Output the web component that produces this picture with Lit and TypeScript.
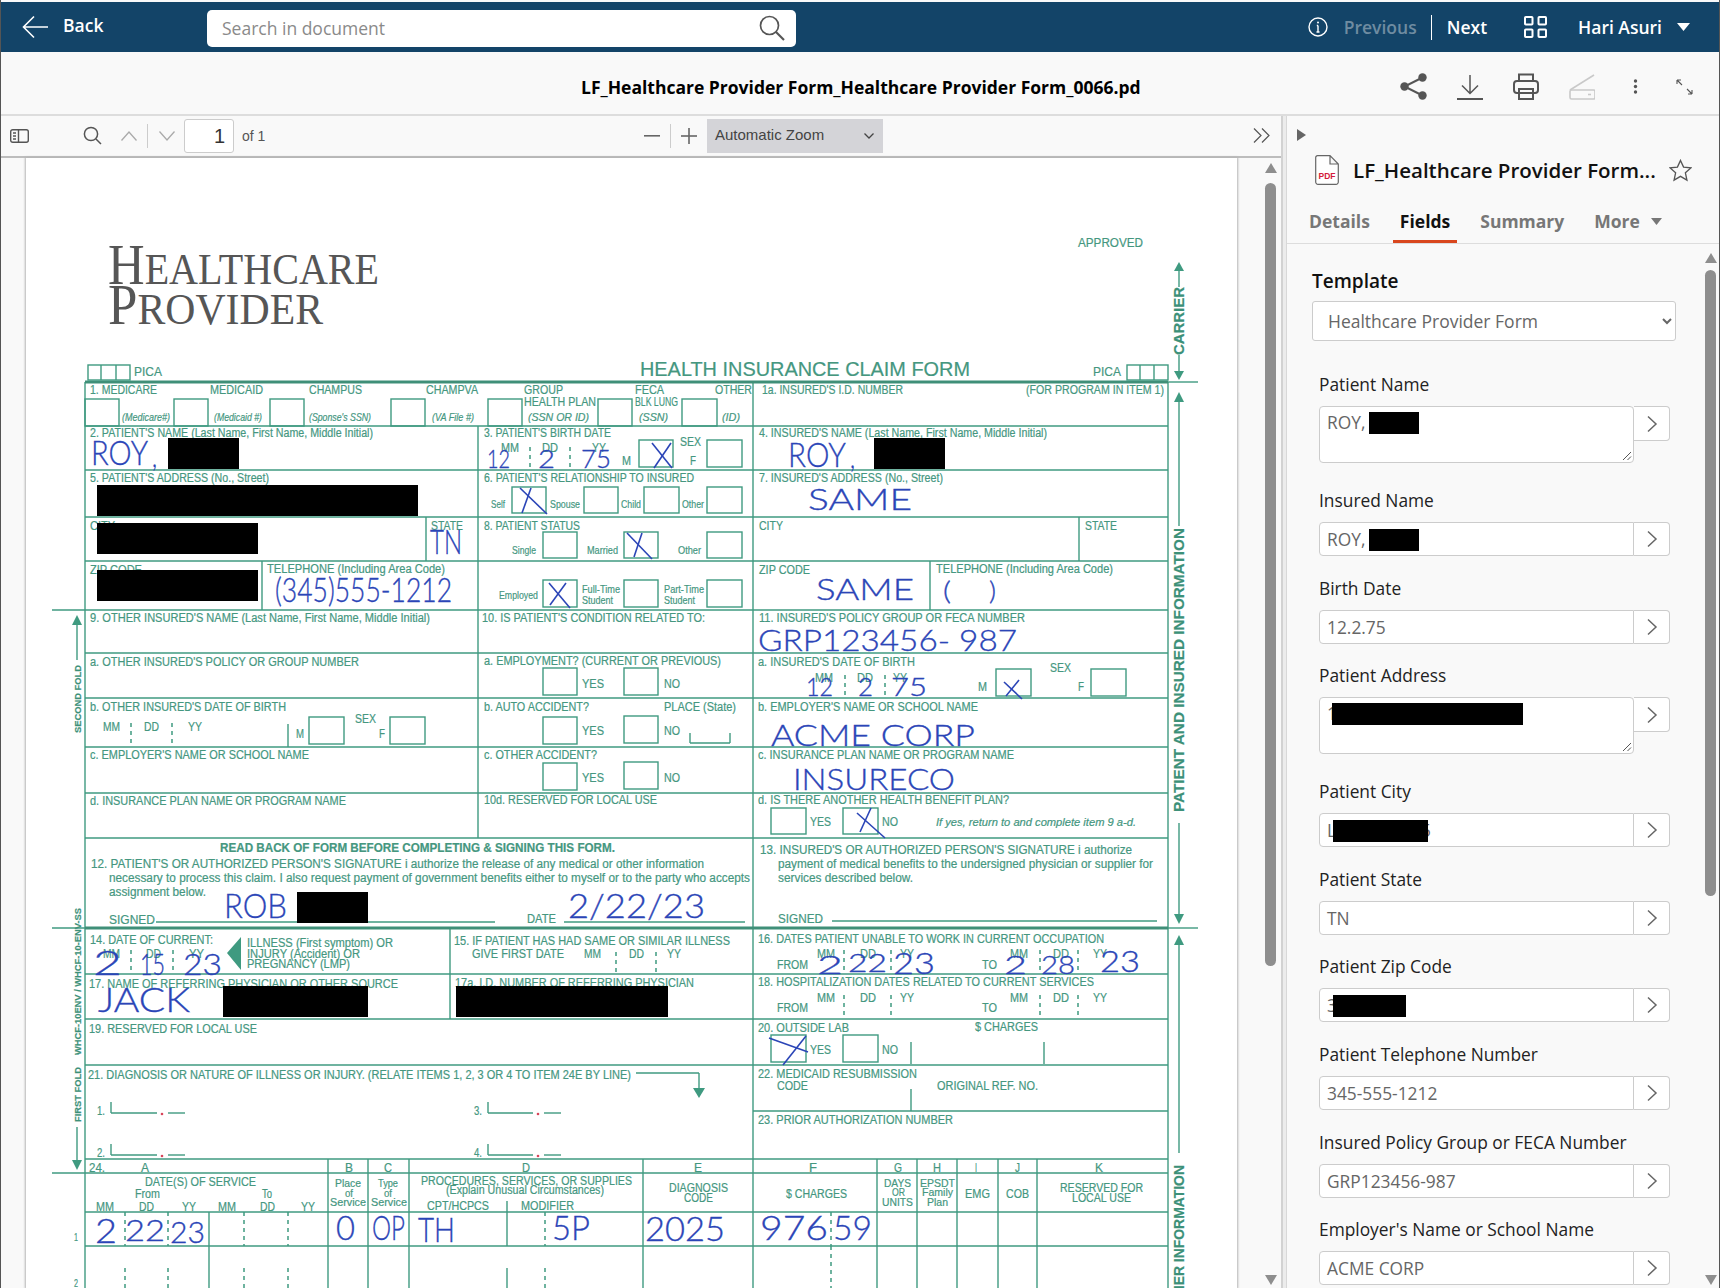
import { LitElement, html, css, svg } from "lit";
import { customElement } from "lit/decorators.js";

type L = [number, number, number, string, string?];
const labels: L[] = [
  [1078,1143,247,"APPROVED","t12"],[640,970,376,"HEALTH INSURANCE CLAIM FORM","t20"],
  [134,162,376,"PICA","t12"],[1093,1121,376,"PICA","t12"],
  [90,157,394,"1. MEDICARE"],[210,263,394,"MEDICAID"],[309,362,394,"CHAMPUS"],[426,478,394,"CHAMPVA"],[524,563,394,"GROUP"],[635,664,394,"FECA"],[715,752,394,"OTHER"],
  [524,596,406,"HEALTH PLAN"],[635,678,406,"BLK LUNG"],
  [122,170,421,"(Medicare#)","it"],[214,262,421,"(Medicaid #)","it"],[309,371,421,"(Sponse's SSN)","it"],[432,474,421,"(VA File #)","it"],[528,589,421,"(SSN OR ID)","it"],[639,668,421,"(SSN)","it"],[722,740,421,"(ID)","it"],
  [762,903,394,"1a. INSURED'S I.D. NUMBER"],[1026,1164,394,"(FOR PROGRAM IN ITEM 1)"],
  [90,373,437,"2. PATIENT'S NAME (Last Name, First Name, Middle Initial)"],[484,611,437,"3. PATIENT'S BIRTH DATE"],
  [501,519,452,"MM"],[542,558,452,"DD"],[592,606,452,"YY"],[622,631,465,"M"],[680,701,446,"SEX"],[690,696,465,"F"],
  [759,1047,437,"4. INSURED'S NAME (Last Name, First Name, Middle Initial)"],
  [90,269,482,"5. PATIENT'S ADDRESS (No., Street)"],[484,694,482,"6. PATIENT'S RELATIONSHIP TO INSURED"],[759,943,482,"7. INSURED'S ADDRESS (No., Street)"],
  [491,505,508,"Self","t10"],[550,580,508,"Spouse","t10"],[621,641,508,"Child","t10"],[682,704,508,"Other","t10"],
  [90,115,530,"CITY"],[431,463,530,"STATE"],[484,580,530,"8. PATIENT STATUS"],[759,783,530,"CITY"],[1085,1117,530,"STATE"],
  [512,536,554,"Single","t10"],[587,618,554,"Married","t10"],[678,701,554,"Other","t10"],
  [90,142,574,"ZIP CODE"],[267,445,573,"TELEPHONE (Including Area Code)"],[759,810,574,"ZIP CODE"],[936,1113,573,"TELEPHONE (Including Area Code)"],
  [499,538,599,"Employed","t10"],[582,620,593,"Full-Time","t10"],[582,613,604,"Student","t10"],[664,704,593,"Part-Time","t10"],[664,695,604,"Student","t10"],
  [90,430,622,"9. OTHER INSURED'S NAME (Last Name, First Name, Middle Initial)"],[482,705,622,"10. IS PATIENT'S CONDITION RELATED TO:"],[759,1025,622,"11. INSURED'S POLICY GROUP OR FECA NUMBER"],
  [90,359,666,"a. OTHER INSURED'S POLICY OR GROUP NUMBER"],[484,721,665,"a. EMPLOYMENT? (CURRENT OR PREVIOUS)"],[758,915,666,"a. INSURED'S DATE OF BIRTH"],
  [582,604,688,"YES"],[664,680,688,"NO"],[815,833,682,"MM"],[857,873,682,"DD"],[893,907,682,"YY"],[978,987,691,"M"],[1050,1071,672,"SEX"],[1078,1084,691,"F"],
  [90,286,711,"b. OTHER INSURED'S DATE OF BIRTH"],[484,589,711,"b. AUTO ACCIDENT?"],[664,736,711,"PLACE (State)"],[758,978,711,"b. EMPLOYER'S NAME OR SCHOOL NAME"],
  [103,120,731,"MM"],[144,159,731,"DD"],[188,202,731,"YY"],[296,304,738,"M"],[355,376,723,"SEX"],[379,385,738,"F"],[582,604,735,"YES"],[664,680,735,"NO"],
  [90,309,759,"c. EMPLOYER'S NAME OR SCHOOL NAME"],[484,597,759,"c. OTHER ACCIDENT?"],[758,1014,759,"c. INSURANCE PLAN NAME OR PROGRAM NAME"],
  [582,604,782,"YES"],[664,680,782,"NO"],
  [90,346,805,"d. INSURANCE PLAN NAME OR PROGRAM NAME"],[484,657,804,"10d. RESERVED FOR LOCAL USE"],[758,1009,804,"d. IS THERE ANOTHER HEALTH BENEFIT PLAN?"],
  [810,831,826,"YES"],[882,898,826,"NO"],[936,1136,826,"If yes, return to and complete item 9 a-d.","it"],
  [220,615,852,"READ BACK OF FORM BEFORE COMPLETING & SIGNING THIS FORM.","bd"],
  [91,704,868,"12. PATIENT'S OR AUTHORIZED PERSON'S SIGNATURE i authorize the release of any medical or other information"],
  [109,750,882,"necessary to process this claim. I also request payment of government benefits either to myself or to the party who accepts"],
  [109,206,896,"assignment below."],[109,155,924,"SIGNED"],[527,556,923,"DATE"],
  [760,1132,854,"13. INSURED'S OR AUTHORIZED PERSON'S SIGNATURE i authorize"],[778,1153,868,"payment of medical benefits to the undersigned physician or supplier for"],[778,913,882,"services described below."],[778,823,923,"SIGNED"],
  [90,213,944,"14. DATE OF CURRENT:"],[103,120,958,"MM"],[146,161,958,"DD"],[189,204,958,"YY"],
  [247,393,947,"ILLNESS (First symptom) OR"],[247,360,958,"INJURY (Accident) OR"],[247,350,968,"PREGNANCY (LMP)"],
  [454,730,945,"15. IF PATIENT HAS HAD SAME OR SIMILAR ILLNESS"],[472,564,958,"GIVE FIRST DATE"],[584,601,958,"MM"],[629,644,958,"DD"],[667,681,958,"YY"],
  [758,1104,943,"16. DATES PATIENT UNABLE TO WORK IN CURRENT OCCUPATION"],[817,835,958,"MM"],[860,876,958,"DD"],[900,914,958,"YY"],[777,808,969,"FROM"],[982,997,969,"TO"],[1010,1028,958,"MM"],[1053,1069,958,"DD"],[1093,1107,958,"YY"],
  [89,398,988,"17. NAME OF REFERRING PHYSICIAN OR OTHER SOURCE"],[455,694,987,"17a. I.D. NUMBER OF REFERRING PHYSICIAN"],
  [758,1094,986,"18. HOSPITALIZATION DATES RELATED TO CURRENT SERVICES"],[817,835,1002,"MM"],[860,876,1002,"DD"],[900,914,1002,"YY"],[777,808,1012,"FROM"],[982,997,1012,"TO"],[1010,1028,1002,"MM"],[1053,1069,1002,"DD"],[1093,1107,1002,"YY"],
  [89,257,1033,"19. RESERVED FOR LOCAL USE"],[758,849,1032,"20. OUTSIDE LAB"],[975,1038,1031,"$ CHARGES"],[810,831,1054,"YES"],[882,898,1054,"NO"],
  [88,631,1079,"21. DIAGNOSIS OR NATURE OF ILLNESS OR INJURY. (RELATE ITEMS 1, 2, 3 OR 4 TO ITEM 24E BY LINE)"],
  [758,917,1078,"22. MEDICAID RESUBMISSION"],[777,808,1090,"CODE"],[937,1038,1090,"ORIGINAL REF. NO."],[758,953,1124,"23. PRIOR AUTHORIZATION NUMBER"],
  [97,105,1115,"1."],[474,482,1115,"3."],[97,105,1157,"2."],[474,482,1157,"4."],
  [89,105,1172,"24."],[141,149,1172,"A"],[345,353,1172,"B"],[384,392,1172,"C"],[522,530,1172,"D"],[694,702,1172,"E"],[809,817,1172,"F"],[894,902,1172,"G"],[933,941,1172,"H"],[975,977,1172,"I"],[1015,1020,1172,"J"],[1095,1103,1172,"K"],
  [145,256,1186,"DATE(S) OF SERVICE"],[135,160,1198,"From"],[262,272,1198,"To"],[96,114,1211,"MM"],[139,154,1211,"DD"],[182,196,1211,"YY"],[218,236,1211,"MM"],[260,275,1211,"DD"],[301,315,1211,"YY"],
  [335,361,1187,"Place","t10"],[345,353,1197,"of","t10"],[330,366,1206,"Service","t10"],[378,398,1187,"Type","t10"],[384,392,1197,"of","t10"],[371,407,1206,"Service","t10"],
  [421,632,1185,"PROCEDURES, SERVICES, OR SUPPLIES"],[446,604,1194,"(Explain Unusual Circumstances)"],[427,489,1210,"CPT/HCPCS"],[521,574,1210,"MODIFIER"],
  [669,728,1192,"DIAGNOSIS"],[684,713,1202,"CODE"],[786,847,1198,"$ CHARGES"],
  [884,911,1187,"DAYS","t10"],[892,905,1196,"OR","t10"],[882,913,1206,"UNITS","t10"],[920,955,1187,"EPSDT","t10"],[922,953,1196,"Family","t10"],[927,948,1206,"Plan","t10"],
  [965,990,1198,"EMG"],[1006,1029,1198,"COB"],[1060,1143,1192,"RESERVED FOR"],[1072,1131,1202,"LOCAL USE"],
  [74,78,1241,"1","t10"],[74,78,1287,"2","t10"],
];

const rules: number[][] = [
  [85,426,1168,426],[85,470,1168,470],[85,517,1168,517],[85,561,1168,561],[52,610,1168,610],
  [85,653,1168,653],[85,698,1168,698],[85,747,1168,747],[85,793,1168,793],[85,838,1168,838],
  [85,974,1168,974],[85,1019,1168,1019],[85,1065,1168,1065],[753,1111,1168,1111],[85,1159,1168,1159],
  [52,1173,1168,1173],[85,1212,1168,1212],[85,1246,1168,1246],
  [85,382,85,1288],[1168,382,1168,1288],[478,426,478,838],[753,382,753,1288],[450,928,450,1019],[426,517,426,561],[262,561,262,610],[1079,517,1079,561],[930,561,930,610],
  [328,1159,328,1288],[368,1159,368,1288],[409,1159,409,1288],[643,1159,643,1288],[877,1159,877,1288],[917,1159,917,1288],[957,1159,957,1288],[998,1159,998,1288],[1037,1159,1037,1288],[209,1212,209,1288],
  [1168,382,1198,382],[1168,928,1198,928],[52,928,85,928],
  [156,922,495,922],[564,922,745,922],[832,921,1157,921],[288,724,288,747],[911,1042,911,1064],[1044,1042,1044,1064],[911,1089,911,1111],[507,1201,507,1212],[507,1212,507,1246],[507,1268,507,1288],
  [690,733,690,743],[690,743,730,743],[730,733,730,743],
  [111,1102,111,1113],[111,1113,157,1113],[168,1113,185,1113],[488,1102,488,1113],[488,1113,533,1113],[544,1113,561,1113],
  [111,1144,111,1155],[111,1155,157,1155],[168,1155,185,1155],[488,1144,488,1155],[488,1155,533,1155],[544,1155,561,1155],
  [636,1073,699,1073],[699,1073,699,1090],
  [1179,265,1179,287],[1179,355,1179,372],[1179,398,1179,526],[1179,823,1179,915],[1179,942,1179,1153],[77,622,77,660],[77,1127,77,1162],
  [101,365,101,380],[116,365,116,380],[1140,365,1140,380],[1154,365,1154,380],
];
const thick: number[][] = [[85,382,1168,382],[85,928,1168,928]];
const dashes: number[][] = [
  [530,447,530,470],[570,447,570,470],[131,723,131,747],[172,723,172,747],[845,675,845,697],[885,675,885,697],
  [131,950,131,973],[173,950,173,973],[616,952,616,973],[656,952,656,973],[844,950,844,973],[891,950,891,973],[1040,950,1040,973],[1078,950,1078,973],
  [844,995,844,1018],[891,995,891,1018],[1040,995,1040,1018],[1078,995,1078,1018],
  [125,1212,125,1246],[168,1212,168,1246],[244,1212,244,1246],[288,1212,288,1246],[545,1212,545,1246],[831,1212,831,1246],
  [125,1268,125,1288],[168,1268,168,1288],[244,1268,244,1288],[288,1268,288,1288],[545,1268,545,1288],[831,1246,831,1288],
];
const boxes: number[][] = [
  [85,399,34,27],[174,399,34,27],[270,399,34,27],[391,399,34,27],[488,399,34,27],[598,399,34,27],[682,399,35,27],
  [639,440,34,27],[707,440,35,27],[512,487,34,26],[584,487,34,26],[644,487,35,26],[707,487,35,26],
  [543,532,34,26],[624,532,34,26],[707,532,35,26],[543,580,34,27],[624,580,34,27],[707,580,35,27],
  [543,668,34,27],[624,668,34,27],[996,669,35,27],[1091,669,35,27],[309,717,35,27],[390,717,35,27],[543,717,34,27],[624,716,34,27],
  [543,763,34,27],[624,762,34,27],[771,808,35,26],[843,808,35,26],[771,1035,35,27],[843,1035,35,27],
  [88,365,42,15],[1127,365,41,15],
];
const redact: number[][] = [
  [168,438,71,31],[874,438,71,31],[97,485,321,31],[97,523,161,31],[97,570,161,31],[297,892,71,31],[223,986,145,31],[456,986,212,31],
];
const hand: L[] = [
  [91,148,465,"ROY","h-lg"],[152,157,467,",","h-md"],[788,846,467,"ROY","h-lg"],[850,855,468,",","h-md"],
  [487,510,468,"12","h-sm"],[538,555,468,"2","h-sm"],[581,611,468,"75","h-sm"],
  [430,462,554,"TN","h-lg"],[275,452,602,"(345)555-1212","h-lg"],
  [808,912,510,"SAME","h-md"],[816,914,600,"SAME","h-md"],[943,951,600,"(","h-sm"],[989,996,600,")","h-sm"],
  [758,1017,651,"GRP123456- 987","h-md"],
  [806,833,696,"12","h-sm"],[858,873,696,"2","h-sm"],[891,927,696,"75","h-sm"],
  [771,975,746,"ACME   CORP","h-md"],[793,955,790,"INSURECO","h-md"],
  [224,287,918,"ROB","h-lg"],[568,705,918,"2/22/23","h-lg"],
  [93,122,975,"2","h-lg"],[140,165,975,"15","h-md"],[183,222,975,"23","h-md"],
  [817,843,974,"2","h-sm"],[848,887,972,"22","h-sm"],[893,935,974,"23","h-md"],[1004,1027,974,"2","h-sm"],[1041,1075,974,"28","h-sm"],[1100,1140,972,"23","h-md"],
  [98,190,1012,"JACK","h-lg"],
  [95,117,1243,"2","h-lg"],[125,165,1241,"22","h-md"],[170,205,1243,"23","h-md"],[336,355,1240,"0","h-lg"],[372,405,1240,"OP","h-lg"],[418,455,1242,"TH","h-lg"],[552,590,1240,"5P","h-lg"],[645,725,1241,"2025","h-lg"],[760,828,1240,"976","h-lg"],[833,872,1240,"59","h-lg"],
];
const crosses: number[][] = [
  [652,443,672,468],[671,443,654,468],
  [520,488,547,514],[531,488,522,513],
  [627,533,652,559],[642,533,634,557],
  [549,583,570,608],[566,583,550,605],
  [1004,682,1022,699],[1019,680,1006,696],
  [857,813,885,838],[871,808,860,832],
  [769,1038,808,1052],[806,1036,783,1065],
];
const heads: string[] = [
  "1179,262 1174,271 1184,271","1179,380 1174,371 1184,371","1179,392 1174,402 1184,402","1179,924 1174,914 1184,914","1179,935 1174,945 1184,945",
  "77,615 72,625 82,625","77,1170 72,1160 82,1160","699,1098 693,1088 705,1088","241,937 241,970 227,953",
];
type R = [number, number, number, string, string];
const vert: R[] = [
  [1183.5,355,287,"CARRIER","v13"],[1183.5,812,528,"PATIENT AND INSURED INFORMATION","v13"],[1183.5,1440,1165,"PHYSICIAN OR SUPPLIER INFORMATION","v13"],
  [81,733,665,"SECOND FOLD","v9"],[81,1122,1067,"FIRST FOLD","v9"],[81,1055,908,"WHCF-10ENV / WHCF-10-ENV-SS","v9"],
];

@customElement("claim-sheet")
export class ClaimSheet extends LitElement {
  static styles = css`
    :host { display: block; width: 1211px; height: 1130px; background: #fff; box-shadow: 0 0 2px 1px #b5b5b5; }
    svg { display: block; }
    text { font-family: "Liberation Sans", Arial, sans-serif; font-size: 12px; fill: #45977f; stroke: #45977f; stroke-width: 0.2px; }
    .t10 { font-size: 10.5px; }
    .t12 { font-size: 12.5px; }
    .t20 { font-size: 20.5px; }
    .it { font-size: 10.5px; font-style: italic; }
    .bd { font-weight: 700; }
    .v13 { font-size: 14px; font-weight: 700; fill: #3c9078; }
    .v9 { font-size: 9.5px; font-weight: 700; fill: #3c9078; }
    .logo { font-family: "Liberation Serif", serif; fill: #565656; stroke: none; font-size: 45px; }
    .logo-cap { font-size: 57px; }
    .rule { stroke: #3f9a80; stroke-width: 1.4; fill: none; }
    .rule-thick { stroke: #3f8f78; stroke-width: 3; }
    .dash { stroke: #3f9a80; stroke-width: 1.5; stroke-dasharray: 4 4; }
    .box { stroke: #3f9a80; stroke-width: 1.4; fill: none; }
    .head { fill: #3f9a80; }
    .red { fill: #000; }
    .dot { fill: #d8455a; }
    .hand { font-family: Lato, "Open Sans", sans-serif; font-weight: 300; fill: #2b45b7; stroke: #2b45b7; stroke-width: 0.35px; }
    .h-lg { font-size: 34px; }
    .h-md { font-size: 30px; }
    .h-sm { font-size: 25px; }
    .cross { stroke: #2b45b7; stroke-width: 1.6; }
  `;
  render() {
    const tx = (l: L) => svg`<text x=${l[0]} y=${l[2]} textLength=${l[1] - l[0]} lengthAdjust="spacingAndGlyphs" class=${l[4] ?? ""}>${l[3]}</text>`;
    const hx = (l: L) => svg`<text x=${l[0]} y=${l[2]} textLength=${l[1] - l[0]} lengthAdjust="spacingAndGlyphs" class="hand ${l[4] ?? ""}">${l[3]}</text>`;
    const ln = (c: string) => (r: number[]) => svg`<line x1=${r[0]} y1=${r[1]} x2=${r[2]} y2=${r[3]} class=${c}></line>`;
    return html`<svg width="1211" height="1130" viewBox="26 158 1211 1130">
      <text class="logo" x="108" y="284" textLength="271" lengthAdjust="spacingAndGlyphs"><tspan class="logo-cap">H</tspan>EALTHCARE</text>
      <text class="logo" x="108" y="324" textLength="215" lengthAdjust="spacingAndGlyphs"><tspan class="logo-cap">P</tspan>ROVIDER</text>
      ${rules.map(ln("rule"))}
      ${thick.map(ln("rule-thick"))}
      ${dashes.map(ln("dash"))}
      ${boxes.map((b) => svg`<rect x=${b[0]} y=${b[1]} width=${b[2]} height=${b[3]} class="box"></rect>`)}
      ${heads.map((p) => svg`<polygon points=${p} class="head"></polygon>`)}
      ${[[162, 1114], [538, 1114], [162, 1156], [538, 1156]].map((d) => svg`<circle cx=${d[0]} cy=${d[1]} r="1.3" class="dot"></circle>`)}
      ${labels.map(tx)}
      ${vert.map((v) => svg`<text transform="translate(${v[0]} ${v[1]}) rotate(-90)" textLength=${v[1] - v[2]} lengthAdjust="spacingAndGlyphs" class=${v[4]}>${v[3]}</text>`)}
      ${hand.map(hx)}
      ${crosses.map(ln("cross"))}
      ${redact.map((b) => svg`<rect x=${b[0]} y=${b[1]} width=${b[2]} height=${b[3]} class="red"></rect>`)}
    </svg>`;
  }
}

type Field = { label: string; value?: string; tail?: string; w?: number; m?: number; tall?: boolean };
const fields: Field[] = [
  { label: "Patient Name", value: "ROY, ", w: 50, m: -1, tall: true },
  { label: "Insured Name", value: "ROY, ", w: 50, m: -1 },
  { label: "Birth Date", value: "12.2.75" },
  { label: "Patient Address", value: "1", w: 191, m: -5, tall: true },
  { label: "Patient City", value: "L", w: 95, m: -3, tail: "5" },
  { label: "Patient State", value: "TN" },
  { label: "Patient Zip Code", value: "3", w: 73, m: -4 },
  { label: "Patient Telephone Number", value: "345-555-1212" },
  { label: "Insured Policy Group or FECA Number", value: "GRP123456-987" },
  { label: "Employer's Name or School Name", value: "ACME CORP" },
];

@customElement("app-root")
export class AppRoot extends LitElement {
  static styles = css`
    :host { display: block; width: 1720px; height: 1288px; overflow: hidden; font-family: "Open Sans", "Noto Sans", sans-serif; background: #f9f9f9; }
    * { box-sizing: border-box; }
    svg { display: block; flex: none; }
    .shell { height: 1288px; display: flex; flex-direction: column; border-left: 1px solid #555; border-right: 1px solid #555; padding-top: 2px; }
    .top { height: 50px; flex: none; background: #134468; display: flex; align-items: center; color: #fff; }
    .back-ic { margin-left: 21px; }
    .back { margin-left: 14px; width: 144px; font-size: 17.5px; font-weight: 600; line-height: 50px; margin-top: -4px; }
    .search { width: 589px; height: 37px; background: #fff; border-radius: 5px; display: flex; align-items: center; justify-content: space-between; padding: 0 11px 0 15px; margin-top: 2px; color: #8a8a8a; font-size: 17.5px; }
    .top-right { margin-left: auto; display: flex; align-items: center; }
    .prev { color: #6f8ca1; font-size: 17.5px; font-weight: 600; margin-left: 16px; width: 88px; height: 25px; line-height: 25px; border-right: 1px solid #fff; }
    .next { font-size: 17.5px; font-weight: 600; margin-left: 15px; }
    .grid-ic { margin-left: 37px; }
    .user { font-size: 17.5px; font-weight: 600; margin-left: 31px; }
    .caret { margin-left: 15px; margin-right: 29px; }
    .title-row { height: 62px; flex: none; display: grid; grid-template-columns: 579px 560px 1fr; align-items: center; padding-top: 7px; }
    .doc { font-size: 17.5px; font-weight: 700; color: #000; white-space: nowrap; overflow: hidden; padding-left: 1px; }
    .tools { display: flex; align-items: center; padding-left: 260px; color: #555; min-width: 0; }
    .tools svg { margin-right: 30px; }
    .tools .off { color: #c9c9c9; }
    .tools .kebab { margin-right: 38px; margin-left: 8px; }
    .main { flex: 1; min-height: 0; display: flex; border-top: 2px solid #ddd; }
    .left { width: 1280px; flex: none; display: flex; flex-direction: column; }
    .bar { height: 42px; flex: none; border-bottom: 2px solid #bdbdbd; display: flex; align-items: center; color: #666; font-family: "Liberation Sans", Arial, sans-serif; background: #f9f9f9; padding-bottom: 1px; }
    .bar .sep { width: 1px; height: 24px; background: #ccc; flex: none; }
    .page-in { width: 50px; height: 34px; background: #fff; border: 1px solid #ccc; border-radius: 3px; font-size: 20px; color: #333; text-align: right; padding-right: 8px; line-height: 32px; margin-left: 9px; }
    .of { font-size: 14px; margin-left: 8px; width: 402px; color: #555; }
    .zoomsel { margin-left: 10px; width: 176px; height: 34px; background: #d4d4d8; color: #444; font-size: 15px; display: flex; align-items: center; justify-content: space-between; padding: 0 9px 3px 8px; }
    .zoomsel svg { margin-top: 3px; }
    .m9 { margin-left: 9px; } .m54 { margin-left: 54px; } .m19 { margin-left: 19px; } .m10 { margin-left: 10px; } .m11 { margin-left: 11px; } .m370 { margin-left: 370px; }
    .viewer { flex: 1; min-height: 0; display: flex; padding-left: 25px; }
    .viewer claim-sheet { flex: none; }
    .sb { flex: none; width: 11px; display: flex; flex-direction: column; align-items: center; color: #8e8e8e; }
    .sb-v { margin-left: 28px; padding-top: 5px; }
    .thumb { width: 11px; background: #8e8e8e; border-radius: 6px; flex: none; }
    .thumb-v { height: 783px; margin-top: 10px; }
    .thumb-p { height: 626px; margin-top: 7px; }
    .sb .dn { margin-top: auto; margin-bottom: 3px; }
    .strip { width: 6px; flex: none; background: #ececec; border-left: 2px solid #d2d2d2; border-right: 1px solid #d8d8d8; }
    .panel { flex: 1; display: flex; flex-direction: column; min-width: 0; }
    .ph { height: 128px; flex: none; border-bottom: 1px solid #ddd; display: flex; flex-direction: column; }
    .tri { margin: 13px 0 0 10px; }
    .ftitle { display: flex; align-items: center; margin: 14px 0 0 28px; }
    .ftitle b { font-size: 20.5px; font-weight: 600; color: #111; margin-left: 14px; width: 316px; white-space: nowrap; }
    .tabs { display: flex; margin: 15px 0 0 22px; height: 43px; font-size: 17.5px; font-weight: 700; color: #777; }
    .tab { line-height: 42px; margin-right: 30px; }
    .tab.on { color: #111; border-bottom: 3px solid #d9471e; padding: 0 7px; height: 43px; margin: 0 23px 0 -7px; }
    .more { display: flex; align-items: center; gap: 11px; height: 42px; }
    .pb { flex: 1; min-height: 0; display: flex; }
    .form { width: 418px; flex: none; padding: 24px 0 0 25px; overflow: hidden; }
    .tpl { font-size: 19px; font-weight: 600; color: #111; line-height: 26px; }
    select { display: block; width: 364px; height: 40px; margin: 7px 0 0 0; background: #fff; border: 1px solid #ccc; border-radius: 3px; font: 17.5px "Open Sans", sans-serif; color: #666; padding-left: 11px; }
    .fields { margin: 31px 0 0 7px; display: flex; flex-direction: column; }
    .f { height: 87.6px; flex: none; }
    .f.tall { height: 116px; }
    .f label { display: block; font-size: 17.35px; color: #222; line-height: 24px; margin-bottom: 10px; }
    .ctl { display: flex; align-items: flex-start; width: 351px; }
    .val { flex: none; width: 315px; height: 34px; background: #fff; border: 1px solid #ccc; border-radius: 4px 0 0 4px; padding-left: 7px; font-size: 17.35px; color: #666; line-height: 33px; white-space: nowrap; position: relative; }
    .tall .val { height: 57px; border-radius: 4px; line-height: 24px; padding-top: 3px; }
    .redact { display: inline-block; height: 22px; background: #000; vertical-align: -5px; position: relative; }
    .tailc { margin-left: -7px; }
    .go { flex: 1; height: 34px; background: #fff; border: 1px solid #ccc; border-left: 0; border-radius: 0 4px 4px 0; display: flex; align-items: center; justify-content: center; color: #666; }
    .tall .go { height: 35px; }
    .grip { position: absolute; right: 1px; bottom: 1px; }
    .sb-p { padding-top: 9px; }
  `;
  chev() {
    return html`<svg width="12" height="18" viewBox="0 0 12 18" fill="none" stroke="currentColor" stroke-width="1.5"><path d="M2 1.5 10 9 2 16.5"/></svg>`;
  }
  sb(cls: string, thumb: string) {
    return html`<div class="sb ${cls}">
      <svg width="12" height="10" viewBox="0 0 12 10" fill="currentColor"><path d="M6 0 12 10H0z"/></svg>
      <div class="thumb ${thumb}"></div>
      <svg class="dn" width="12" height="10" viewBox="0 0 12 10" fill="currentColor"><path d="M0 0H12L6 10z"/></svg>
    </div>`;
  }
  render() {
    return html`<div class="shell">
      <header class="top">
        <svg class="back-ic" width="27" height="24" viewBox="0 0 27 24" fill="none" stroke="#fff" stroke-width="1.6"><path d="M26 12H1.5M12 1.5 1.5 12 12 22.5"/></svg>
        <span class="back">Back</span>
        <div class="search"><span>Search in document</span>
          <svg width="26" height="26" viewBox="0 0 26 26" fill="none" stroke="#555" stroke-width="1.7"><circle cx="10.5" cy="10.5" r="9"/><path d="M17 17 25 25" stroke-width="2.2"/></svg>
        </div>
        <div class="top-right">
          <svg width="20" height="20" viewBox="0 0 20 20" fill="none" stroke="#fff" stroke-width="1.4"><circle cx="10" cy="10" r="9"/><path d="M10 8.5V15M8.5 15h3M8.8 8.5H10" /><circle cx="10" cy="5.4" r="1" fill="#fff" stroke="none"/></svg>
          <span class="prev">Previous</span>
          <span class="next">Next</span>
          <svg class="grid-ic" width="23" height="22" viewBox="0 0 23 22" fill="none" stroke="#fff" stroke-width="2"><rect x="1" y="1" width="7.5" height="7.5" rx=".8"/><rect x="14.5" y="1" width="7.5" height="7.5" rx=".8"/><rect x="1" y="13.5" width="7.5" height="7.5" rx=".8"/><rect x="14.5" y="13.5" width="7.5" height="7.5" rx=".8"/></svg>
          <span class="user">Hari Asuri</span>
          <svg class="caret" width="13" height="8" viewBox="0 0 13 8" fill="#fff"><path d="M0 0H13L6.5 8z"/></svg>
        </div>
      </header>
      <div class="title-row">
        <span></span>
        <div class="doc">LF_Healthcare Provider Form_Healthcare Provider Form_0066.pdf</div>
        <div class="tools">
          <svg width="27" height="27" viewBox="0 0 27 27" fill="currentColor"><circle cx="22.5" cy="4.5" r="4.2"/><circle cx="4.5" cy="13.5" r="4.2"/><circle cx="22.5" cy="22.5" r="4.2"/><path d="M22.5 4.5 4.5 13.5 22.5 22.5" fill="none" stroke="currentColor" stroke-width="2"/></svg>
          <svg width="26" height="26" viewBox="0 0 26 26" fill="none" stroke="currentColor" stroke-width="1.5"><path d="M13 1V19M5 11.5 13 19.5 21 11.5"/><path d="M0 25H26" stroke-width="2"/></svg>
          <svg width="26" height="27" viewBox="0 0 26 27" fill="none" stroke="currentColor" stroke-width="2"><path d="M6 8V1.5H20V8"/><rect x="1" y="8" width="24" height="12" rx="3"/><rect x="6" y="16" width="14" height="10"/></svg>
          <svg class="off" width="26" height="26" viewBox="0 0 26 26" fill="none" stroke="currentColor" stroke-width="1.6"><path d="M1 16 25 1"/><rect x="1" y="16" width="25" height="9" rx="1.5"/><path d="M19 20.5h3"/></svg>
          <svg class="kebab" width="5" height="15" viewBox="0 0 5 15" fill="currentColor"><circle cx="2.5" cy="2" r="1.7"/><circle cx="2.5" cy="7.5" r="1.7"/><circle cx="2.5" cy="13" r="1.7"/></svg>
          <svg width="17" height="16" viewBox="0 0 17 16" fill="none" stroke="currentColor" stroke-width="1.1"><path d="M1 1 6 6M1 1V5M1 1H5M16 15 11 10M16 15V11M16 15H12"/></svg>
        </div>
      </div>
      <div class="main">
        <section class="left">
          <div class="bar">
            <svg class="m9" width="19" height="14" viewBox="0 0 19 14" fill="none" stroke="#555" stroke-width="1.4"><rect x=".7" y=".7" width="17.6" height="12.6" rx="2"/><path d="M8.5 .7V13.3M3 4H6M3 7H6M3 10H6"/></svg>
            <svg class="m54" width="19" height="19" viewBox="0 0 19 19" fill="none" stroke="#555" stroke-width="1.5"><circle cx="8" cy="8" r="6.6"/><path d="M13 13 18 18"/></svg>
            <svg class="m19" width="16" height="10" viewBox="0 0 16 10" fill="none" stroke="#aaa" stroke-width="1.3"><path d="M.5 9.5 8 1l7.5 8.5"/></svg>
            <span class="sep m10"></span>
            <svg class="m11" width="16" height="10" viewBox="0 0 16 10" fill="none" stroke="#aaa" stroke-width="1.3"><path d="M.5 .5 8 9l7.5-8.5"/></svg>
            <div class="page-in">1</div>
            <span class="of">of 1</span>
            <svg width="16" height="2" viewBox="0 0 16 2" fill="#666"><rect width="16" height="1.6"/></svg>
            <span class="sep m10"></span>
            <svg class="m10" width="16" height="16" viewBox="0 0 16 16" fill="#666"><rect y="7.2" width="16" height="1.6"/><rect x="7.2" width="1.6" height="16"/></svg>
            <div class="zoomsel"><span>Automatic Zoom</span><svg width="10" height="6" viewBox="0 0 10 6" fill="none" stroke="#444" stroke-width="1.3"><path d="M.5 .5 5 5 9.500 .5"/></svg></div>
            <svg class="m370" width="17" height="15" viewBox="0 0 17 15" fill="none" stroke="#555" stroke-width="1.2"><path d="M1 .5 8 7.500 1 14.500M9 .5 16 7.500 9 14.500"/></svg>
          </div>
          <div class="viewer">
            <claim-sheet></claim-sheet>
            ${this.sb("sb-v", "thumb-v")}
          </div>
        </section>
        <div class="strip"></div>
        <aside class="panel">
          <div class="ph">
            <svg class="tri" width="9" height="12" viewBox="0 0 9 12" fill="#666"><path d="M0 0 9 6 0 12z"/></svg>
            <div class="ftitle">
              <svg width="24" height="30" viewBox="0 0 24 30"><path d="M2.500 .7H15L23.300 9V27a2.300 2.300 0 0 1-2.300 2.300H3A2.300 2.300 0 0 1 .7 27V2.500A1.800 1.800 0 0 1 2.500 .7z M15 .7V9H23.300" fill="#fff" stroke="#666" stroke-width="1.2"/><text x="12" y="24" text-anchor="middle" font-family="'Liberation Sans', sans-serif" font-size="8.500" font-weight="700" fill="#d41b3c">PDF</text></svg>
              <b>LF_Healthcare Provider Form...</b>
              <svg width="23" height="23" viewBox="0 0 24 24" fill="none" stroke="#555" stroke-width="1.4"><path d="M12 1.500 15.200 8.500 22.800 9.300 17.100 14.400 18.700 22 12 18.100 5.300 22 6.900 14.400 1.200 9.300 8.800 8.500z"/></svg>
            </div>
            <nav class="tabs">
              <span class="tab">Details</span>
              <span class="tab on">Fields</span>
              <span class="tab">Summary</span>
              <span class="more">More <svg width="11" height="7" viewBox="0 0 11 7" fill="#777"><path d="M0 0H11L5.500 7z"/></svg></span>
            </nav>
          </div>
          <div class="pb">
            <div class="form">
              <div class="tpl">Template</div>
              <select><option>Healthcare Provider Form</option></select>
              <div class="fields">
                ${fields.map((f) => html`<div class="f ${f.tall ? "tall" : ""}">
                  <label>${f.label}</label>
                  <div class="ctl">
                    <div class="val">${f.value}${f.w ? html`<span class="redact" style="width:${f.w}px;margin-left:${f.m}px"></span>` : ""}${f.tail ? html`<span class="tailc">${f.tail}</span>` : ""}${f.tall ? html`<svg class="grip" width="10" height="10" viewBox="0 0 10 10" stroke="#555" stroke-width="1"><path d="M1 9 9 1M5.500 9 9 5.500"/></svg>` : ""}</div>
                    <div class="go">${this.chev()}</div>
                  </div>
                </div>`)}
              </div>
            </div>
            ${this.sb("sb-p", "thumb-p")}
          </div>
        </aside>
      </div>
    </div>`;
  }
}
